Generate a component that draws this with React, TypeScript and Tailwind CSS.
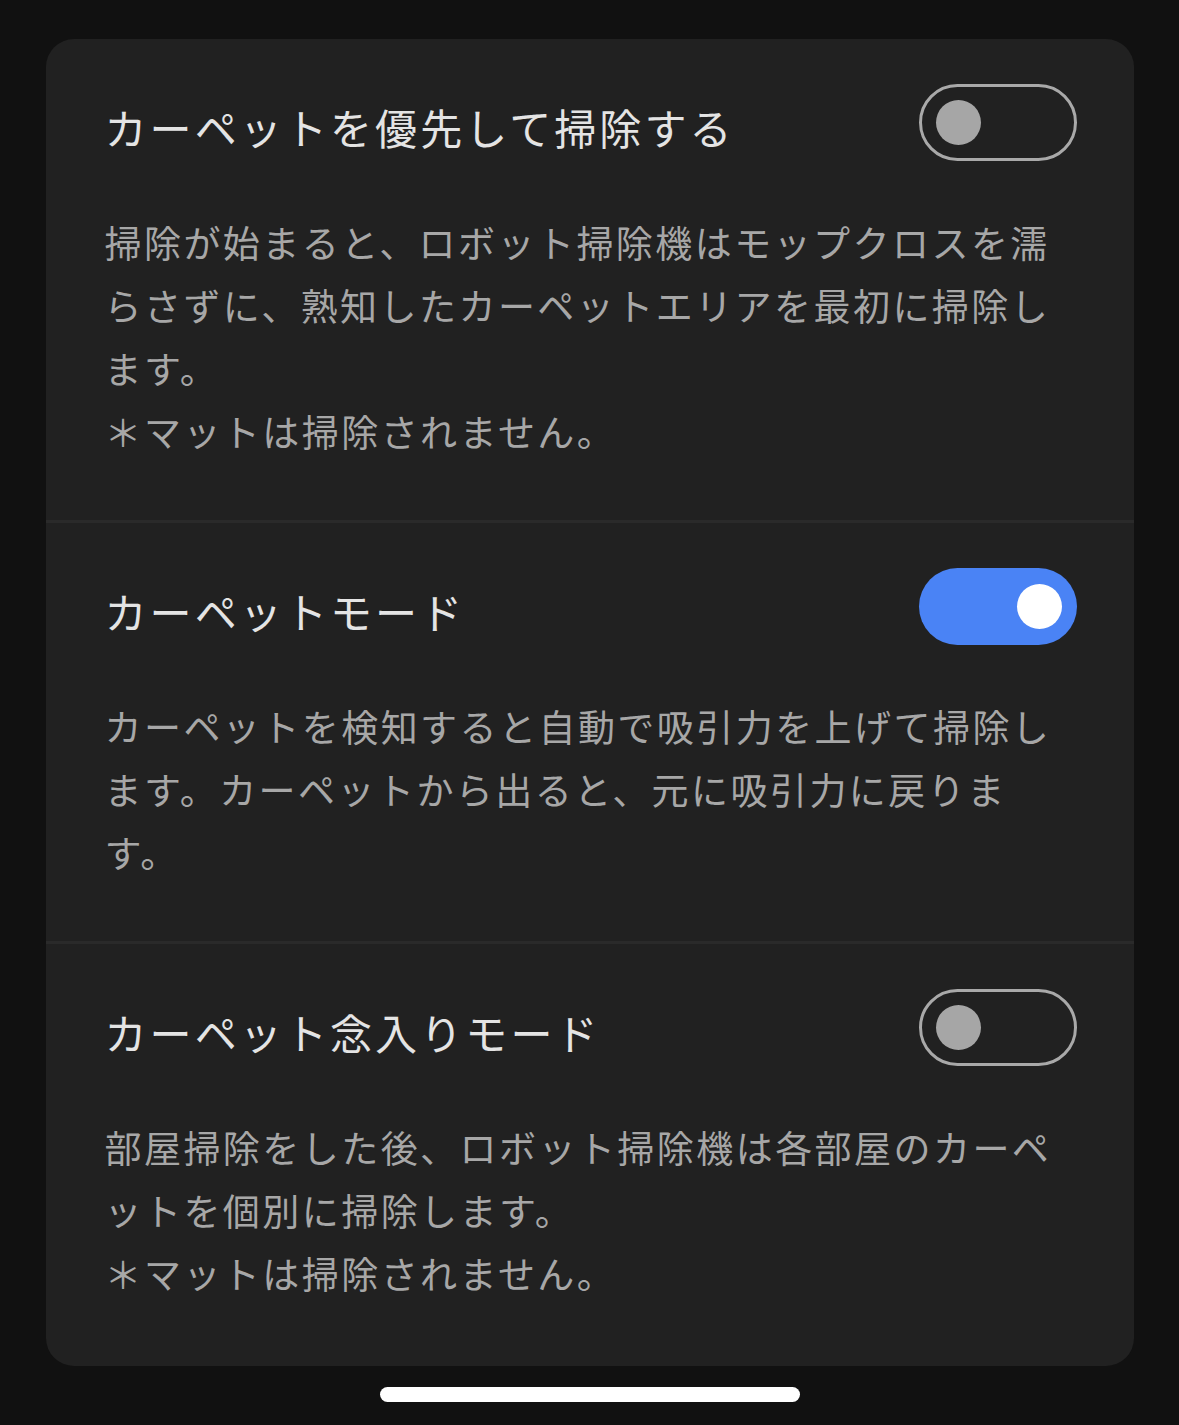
import { useState } from 'react'

type Setting = {
  title: string
  lines: string[]
  on: boolean
}

const settings: Setting[] = [
  {
    title: 'カーペットを優先して掃除する',
    lines: [
      '掃除が始まると、ロボット掃除機はモップクロスを濡',
      'らさずに、熟知したカーペットエリアを最初に掃除し',
      'ます。',
      '＊マットは掃除されません。',
    ],
    on: false,
  },
  {
    title: 'カーペットモード',
    lines: [
      'カーペットを検知すると自動で吸引力を上げて掃除し',
      'ます。カーペットから出ると、元に吸引力に戻りま',
      'す。',
    ],
    on: true,
  },
  {
    title: 'カーペット念入りモード',
    lines: [
      '部屋掃除をした後、ロボット掃除機は各部屋のカーペ',
      'ットを個別に掃除します。',
      '＊マットは掃除されません。',
    ],
    on: false,
  },
]

function Toggle({ on, onClick }: { on: boolean; onClick: () => void }) {
  return (
    <button
      onClick={onClick}
      className={
        on
          ? 'flex h-[77px] w-[158px] shrink-0 items-center justify-end rounded-full bg-[#4a83f5] px-[15px]'
          : 'flex h-[77px] w-[158px] shrink-0 items-center justify-start rounded-full border-[3px] border-[#a9a9a9] px-[14px]'
      }
    >
      <span className={on ? 'h-[45px] w-[45px] rounded-full bg-white' : 'h-[45px] w-[45px] rounded-full bg-[#a6a6a6]'} />
    </button>
  )
}

export default function App() {
  const [state, setState] = useState(settings.map((s) => s.on))
  return (
    <div
      className="flex min-h-[1425px] w-full flex-col items-center bg-[#111111] pt-[39px]"
      style={{ fontFamily: '"Noto Sans CJK JP", "Noto Sans", sans-serif' }}
    >
      <div className="w-[1088px] overflow-hidden rounded-[28px] bg-[#212121]">
        {settings.map((s, i) => (
          <section
            key={s.title}
            className={
              i < settings.length - 1
                ? 'border-b-[3px] border-[#2a2a2a] pb-[57px] pl-[59px] pr-[57px] pt-[45px]'
                : 'pb-[61px] pl-[59px] pr-[57px] pt-[45px]'
            }
          >
            <div className="flex items-center justify-between">
              <h2 className="mt-[8px] text-[42px] leading-none tracking-[3.1px] text-[#e4e4e4]">{s.title}</h2>
              <Toggle
                on={state[i]}
                onClick={() => setState((prev) => prev.map((v, j) => (j === i ? !v : v)))}
              />
            </div>
            <p className="mt-[50px] text-[37px] leading-[63px] tracking-[2.45px] text-[#a7a7a7]">
              {s.lines.map((l) => (
                <span key={l} className="block whitespace-nowrap">
                  {l}
                </span>
              ))}
            </p>
          </section>
        ))}
      </div>
      <div className="mt-[21px] h-[15px] w-[420px] rounded-full bg-white" />
    </div>
  )
}
